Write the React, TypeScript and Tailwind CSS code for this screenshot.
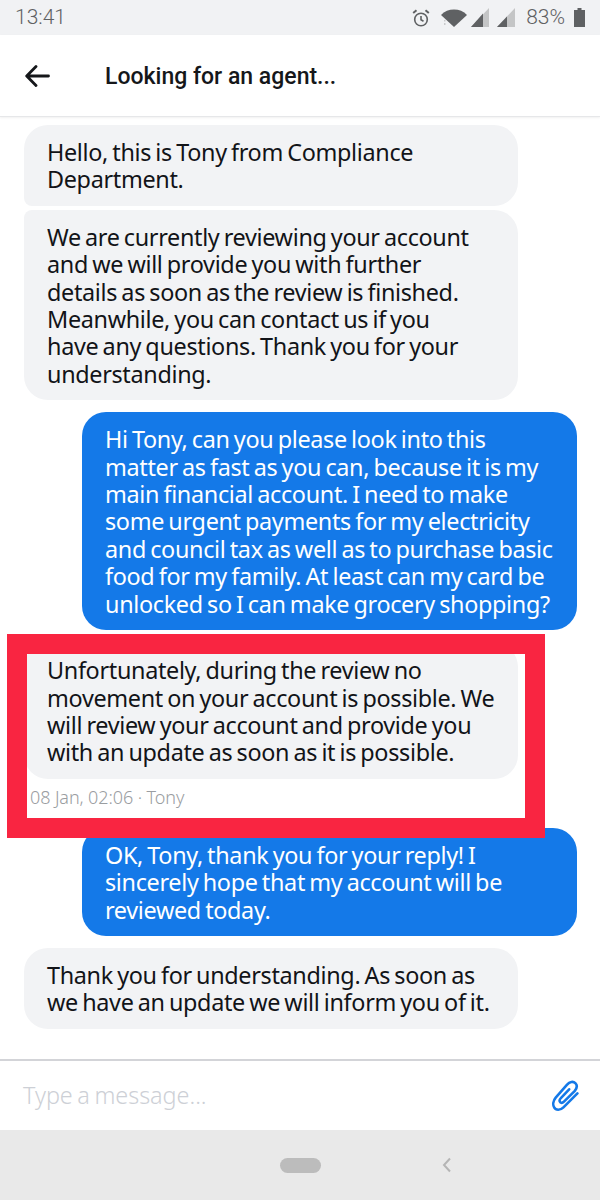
import React from "react";

const Incoming = ({ children, className = "" }: { children: React.ReactNode; className?: string }) => (
  <div className={`w-[494px] shrink-0 whitespace-nowrap bg-[#f2f3f5] px-[23px] pb-[12px] pt-[14px] text-[#121418] ${className}`}>
    {children}
  </div>
);

const Outgoing = ({ children, className = "" }: { children: React.ReactNode; className?: string }) => (
  <div className={`ml-[58px] w-[495px] shrink-0 whitespace-nowrap rounded-[24px] bg-[#1479e8] px-[23px] pb-[12px] pt-[14px] text-white ${className}`}>
    {children}
  </div>
);

const StatusIcons = () => (
  <div className="flex items-center text-[#5f6163]">
    <svg width="18" height="18" viewBox="0 0 18 18" fill="none" stroke="currentColor" strokeWidth="1.6">
      <circle cx="9" cy="10.500" r="6.300" />
      <path d="M9 7V10.800L11.500 12.300" />
      <path d="M1.200 4L4.500 1.200M16.800 4L13.500 1.200" strokeWidth="2" />
    </svg>
    <svg width="26" height="18" viewBox="0 0 26 18" fill="currentColor" className="ml-[11px]">
      <path d="M0 6C3.500 2.200 8 .5 13 .5S22.500 2.200 26 6L13 18Z" />
      <path d="M3 11H4.500V12.500H3ZM3 14H4.500V16H3Z" fill="#c9cacb" />
    </svg>
    <svg width="18" height="19" viewBox="0 0 18 19" className="ml-[4px]">
      <path d="M18 0V19H0Z" fill="#c4c5c6" />
      <path d="M12 5.500V19H0Z" fill="currentColor" />
    </svg>
    <svg width="18" height="19" viewBox="0 0 18 19" className="ml-[8px]">
      <path d="M18 0V19H0Z" fill="#c4c5c6" />
      <path d="M10 8.500V19H0Z" fill="currentColor" />
    </svg>
    <span className="ml-[11px] font-['Roboto',sans-serif] text-[21px] font-light tracking-normal [word-spacing:0]">83%</span>
    <svg width="11" height="19" viewBox="0 0 11 19" fill="currentColor" className="ml-[9px]">
      <path d="M3.500 0H7.500V2H11V19H0V2H3.500Z" />
    </svg>
  </div>
);

export default function App() {
  return (
    <div
      className="flex h-[1200px] w-[600px] flex-col overflow-hidden bg-white text-[23.4px] font-[370] leading-[27.4px] tracking-[-0.33px] [word-spacing:-1.5px]"
      style={{ fontFamily: '"Noto Sans", sans-serif' }}
    >
      <div className="flex h-[35px] shrink-0 items-center justify-between bg-[#f1f2f4] pl-[15px] pr-[15px]">
        <span className="font-['Roboto',sans-serif] text-[21px] font-light tracking-normal text-[#5f6163]">13:41</span>
        <StatusIcons />
      </div>

      <div className="flex h-[82px] shrink-0 items-center border-b border-[#e6e7e9] pl-[25px] shadow-[0_1px_2px_rgba(0,0,0,0.06)]">
        <svg width="25" height="22" viewBox="0 0 25 22" fill="none" stroke="#15171a" strokeWidth="2.800" strokeLinecap="round" strokeLinejoin="round">
          <path d="M23.500 11H2M11 1.500L1.700 11L11 20.500" />
        </svg>
        <span className="ml-[55px] pt-[3px] font-['Roboto',sans-serif] text-[23px] font-medium tracking-normal [word-spacing:0] text-[#15171a]">
          Looking for an agent...
        </span>
      </div>

      <div className="flex min-h-0 flex-1 flex-col pl-[24px] pt-[8px]">
        <Incoming className="rounded-[24px] rounded-bl-[8px]">
          Hello, this is Tony from Compliance
          <br />
          Department.
        </Incoming>
        <Incoming className="mt-[4px] rounded-[24px] rounded-tl-[8px]">
          We are currently reviewing your account
          <br />
          and we will provide you with further
          <br />
          details as soon as the review is finished.
          <br />
          Meanwhile, you can contact us if you
          <br />
          have any questions. Thank you for your
          <br />
          understanding.
        </Incoming>
        <Outgoing className="mt-[12px]">
          Hi Tony, can you please look into this
          <br />
          matter as fast as you can, because it is my
          <br />
          main financial account. I need to make
          <br />
          some urgent payments for my electricity
          <br />
          and council tax as well as to purchase basic
          <br />
          food for my family. At least can my card be
          <br />
          unlocked so I can make grocery shopping?
        </Outgoing>

        <div className="relative mt-[13px] shrink-0">
          <Incoming className="rounded-[24px]">
            Unfortunately, during the review no
            <br />
            movement on your account is possible. We
            <br />
            will review your account and provide you
            <br />
            with an update as soon as it is possible.
          </Incoming>
          <div className="ml-[6px] mt-[6px] h-[43px] text-[18px] font-light leading-[24px] tracking-[-0.1px] [word-spacing:0] text-[#9a9da1]">
            08 Jan, 02:06 · Tony
          </div>
          <div className="absolute left-[-17px] top-[-9px] h-[204px] w-[538px] border-[20px] border-[#f92541]" />
        </div>

        <Outgoing>
          OK, Tony, thank you for your reply! I
          <br />
          sincerely hope that my account will be
          <br />
          reviewed today.
        </Outgoing>
        <Incoming className="mt-[12px] rounded-[24px]">
          Thank you for understanding. As soon as
          <br />
          we have an update we will inform you of it.
        </Incoming>
      </div>

      <div className="flex h-[71px] shrink-0 items-center justify-between border-t-2 border-[#d3d4d8] pl-[23px] pr-[21px]">
        <span className="font-light tracking-[-0.02px] text-[#cdd0d6]">Type a message...</span>
        <svg width="28" height="31" viewBox="0 0 26 30" fill="none" stroke="#1479e8" strokeWidth="2.500" strokeLinecap="round">
          <path d="M25 13L11.500 26.500C8.500 29.500 4 29.500 2.500 26.500C1 24 1.500 20 4 17L15 4.500C17.500 1.500 21 1 23 3C25 5 24.500 8 22.500 10.500L12 21C10.500 22.500 8.500 22.500 8 21C7.500 20 8 18.500 9 17.500L17 9" />
        </svg>
      </div>

      <div className="flex h-[70px] shrink-0 items-center bg-[#e9e9e9]">
        <div className="ml-[280px] h-[15px] w-[41px] rounded-[8px] bg-[#bcbcbc]" />
        <svg width="10" height="16" viewBox="0 0 10 16" fill="none" stroke="#b5b5b5" strokeWidth="2" className="ml-[121px]">
          <path d="M8 1.500L2 8L8 14.500" />
        </svg>
      </div>
    </div>
  );
}
